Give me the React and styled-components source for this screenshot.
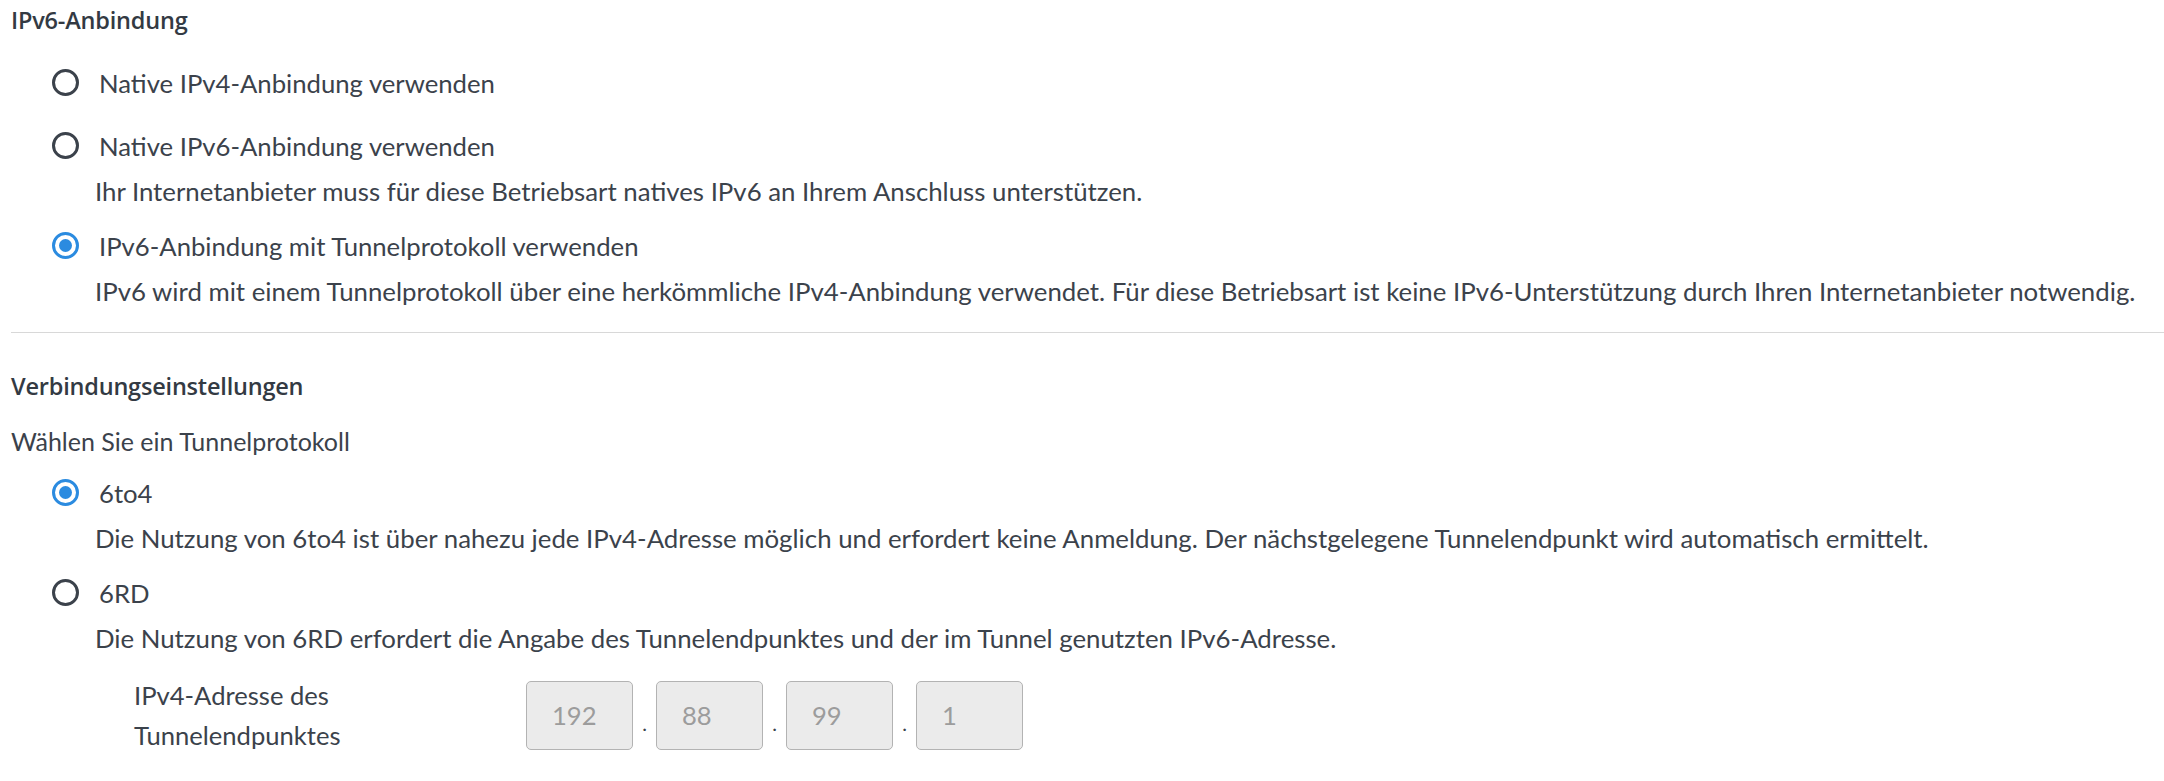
import styled, { createGlobalStyle } from 'styled-components';

const GlobalStyle = createGlobalStyle`
  html, body {
    margin: 0;
    padding: 0;
    background: #ffffff;
  }
  body {
    font-family: Lato, 'Open Sans', sans-serif;
    color: #3b424b;
  }
`;

const Page = styled.div`
  display: flex;
  flex-direction: column;
  padding: 2px 0 0 11px;
  width: 2164px;
  box-sizing: border-box;
`;

const Heading = styled.div`
  font-family: 'Open Sans', Lato, sans-serif;
  font-size: 23.5px;
  font-weight: 600;
  letter-spacing: -0.2px;
  line-height: 37px;
  color: #333a43;
  margin-top: ${(p) => p.$top || 0}px;
`;

const Text = styled.div`
  font-size: 25px;
  line-height: 37px;
  margin-top: ${(p) => p.$top || 0}px;
`;

const Options = styled.div`
  display: flex;
  flex-direction: column;
  gap: 8px;
  margin-top: ${(p) => p.$top || 0}px;
  padding-left: 41px;
`;

const Option = styled.div`
  display: flex;
  flex-direction: column;
`;

const OptionRow = styled.label`
  display: flex;
  align-items: center;
  gap: 20px;
  height: 55px;
  font-size: 25.7px;
  white-space: nowrap;
`;

const Radio = styled.span`
  width: 27px;
  height: 27px;
  box-sizing: border-box;
  border-radius: 50%;
  border: 3px solid ${(p) => (p.$checked ? '#2b8be0' : '#3b424b')};
  display: flex;
  align-items: center;
  justify-content: center;
  flex-shrink: 0;

  &::after {
    content: '';
    display: ${(p) => (p.$checked ? 'block' : 'none')};
    width: 13px;
    height: 13px;
    border-radius: 50%;
    background: #2b8be0;
  }
`;

const Desc = styled.div`
  padding-left: 43px;
  font-size: 25.8px;
  line-height: 37px;
  white-space: nowrap;
`;

const Divider = styled.hr`
  border: none;
  border-top: 1.5px solid #d8d8d8;
  margin: 22px 0 0 0;
  width: 100%;
`;

const AddressRow = styled.div`
  display: flex;
  align-items: center;
  margin-top: 18px;
  padding-left: 123px;
`;

const AddressLabel = styled.div`
  width: 392px;
  font-size: 25.6px;
  line-height: 40px;
`;

const Octets = styled.div`
  display: flex;
  align-items: center;
`;

const Octet = styled.div`
  width: 107px;
  height: 69px;
  box-sizing: border-box;
  border: 1.5px solid #b3b3b3;
  border-radius: 5px;
  background: #ebebeb;
  color: #9c9c9c;
  font-size: 25.6px;
  display: flex;
  align-items: center;
  padding-left: 25px;
`;

const Dot = styled.span`
  width: 23px;
  text-align: center;
  font-size: 20px;
  color: #3b424b;
  padding-top: 16px;
`;

const Choice = ({ label, desc, checked }) => (
  <Option>
    <OptionRow>
      <Radio $checked={checked} />
      {label}
    </OptionRow>
    {desc && <Desc>{desc}</Desc>}
  </Option>
);

export default function App() {
  const octets = ['192', '88', '99', '1'];
  return (
    <Page>
      <GlobalStyle />
      <Heading>IPv6-Anbindung</Heading>
      <Options $top={16}>
        <Choice label="Native IPv4-Anbindung verwenden" />
        <Choice
          label="Native IPv6-Anbindung verwenden"
          desc="Ihr Internetanbieter muss für diese Betriebsart natives IPv6 an Ihrem Anschluss unterstützen."
        />
        <Choice
          checked
          label="IPv6-Anbindung mit Tunnelprotokoll verwenden"
          desc="IPv6 wird mit einem Tunnelprotokoll über eine herkömmliche IPv4-Anbindung verwendet. Für diese Betriebsart ist keine IPv6-Unterstützung durch Ihren Internetanbieter notwendig."
        />
      </Options>
      <Divider />
      <Heading $top={35}>Verbindungseinstellungen</Heading>
      <Text $top={18}>Wählen Sie ein Tunnelprotokoll</Text>
      <Options $top={5}>
        <Choice
          checked
          label="6to4"
          desc="Die Nutzung von 6to4 ist über nahezu jede IPv4-Adresse möglich und erfordert keine Anmeldung. Der nächstgelegene Tunnelendpunkt wird automatisch ermittelt."
        />
        <Choice
          label="6RD"
          desc="Die Nutzung von 6RD erfordert die Angabe des Tunnelendpunktes und der im Tunnel genutzten IPv6-Adresse."
        />
      </Options>
      <AddressRow>
        <AddressLabel>
          IPv4-Adresse des
          <br />
          Tunnelendpunktes
        </AddressLabel>
        <Octets>
          {octets.map((o, i) => (
            <Octets key={o}>
              {i > 0 && <Dot>.</Dot>}
              <Octet>{o}</Octet>
            </Octets>
          ))}
        </Octets>
      </AddressRow>
    </Page>
  );
}
